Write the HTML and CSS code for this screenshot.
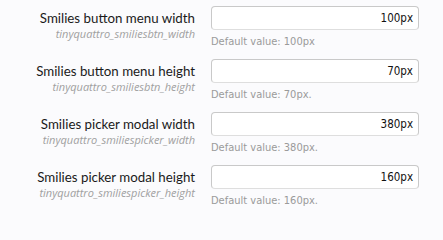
FILE: index.html
```html
<!DOCTYPE html>
<html>
<head>
<meta charset="utf-8">
<link rel="stylesheet" href="styles.css">
</head>
<body>
<div class="form">
  <div class="row">
    <div class="label">
      <div class="title">Smilies button menu width</div>
      <div class="key">tinyquattro_smiliesbtn_width</div>
    </div>
    <div class="field">
      <div class="input">100px</div>
      <div class="hint">Default value: 100px</div>
    </div>
  </div>
  <div class="row">
    <div class="label">
      <div class="title">Smilies button menu height</div>
      <div class="key">tinyquattro_smiliesbtn_height</div>
    </div>
    <div class="field">
      <div class="input">70px</div>
      <div class="hint">Default value: 70px.</div>
    </div>
  </div>
  <div class="row">
    <div class="label">
      <div class="title">Smilies picker modal width</div>
      <div class="key">tinyquattro_smiliespicker_width</div>
    </div>
    <div class="field">
      <div class="input">380px</div>
      <div class="hint">Default value: 380px.</div>
    </div>
  </div>
  <div class="row">
    <div class="label">
      <div class="title">Smilies picker modal height</div>
      <div class="key">tinyquattro_smiliespicker_height</div>
    </div>
    <div class="field">
      <div class="input">160px</div>
      <div class="hint">Default value: 160px.</div>
    </div>
  </div>
</div>
</body>
</html>
```
FILE: styles.css
```css
html, body {
  margin: 0;
  padding: 0;
  background: #fbfbfd;
}
.form {
  display: flex;
  flex-direction: column;
}
.row {
  display: grid;
  grid-template-columns: 195px 208px;
  column-gap: 16px;
  height: 53px;
  padding-top: 6px;
  box-sizing: border-box;
}
.label {
  text-align: right;
  padding-top: 4px;
}
.title {
  font-family: Lato, sans-serif;
  font-size: 13.3px;
  font-weight: 400;
  line-height: 17px;
  color: #1a1a1a;
}
.key {
  font-family: "Open Sans", sans-serif;
  font-style: italic;
  font-size: 11px;
  line-height: 14px;
  color: #a0a0a0;
}
.input {
  height: 24px;
  box-sizing: border-box;
  border: 1px solid #c9c9c9;
  border-bottom-color: #dedede;
  border-radius: 4px;
  background: #fff;
  text-align: right;
  padding: 0 5px;
  font-family: "DejaVu Sans Condensed", "DejaVu Sans", sans-serif;
  font-size: 11.5px;
  line-height: 22px;
  color: #111;
}
.hint {
  font-family: "DejaVu Sans Condensed", "DejaVu Sans", sans-serif;
  font-size: 11px;
  line-height: 14px;
  margin-top: 5px;
  color: #9a9a9a;
}
```
